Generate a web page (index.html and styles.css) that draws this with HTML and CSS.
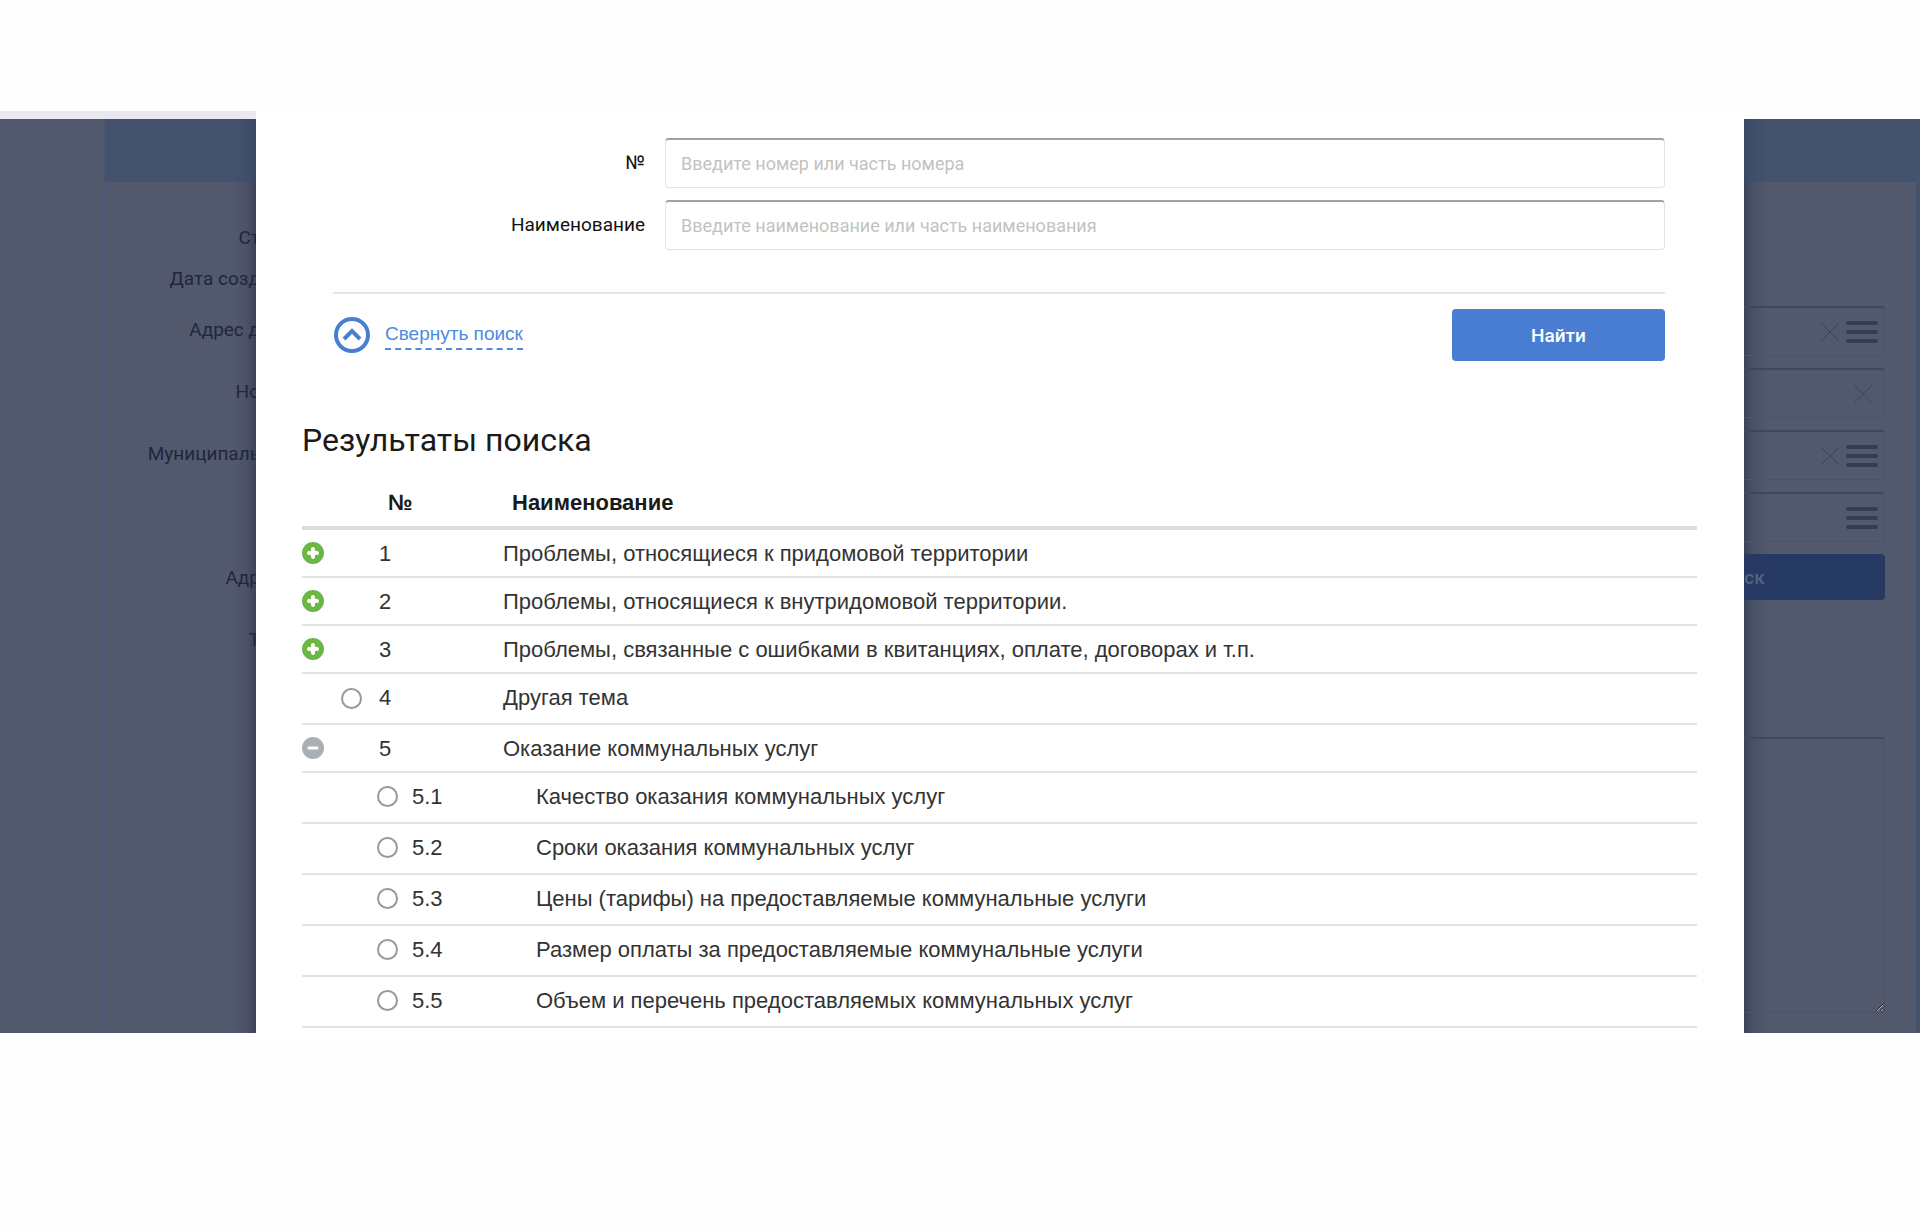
FILE: index.html
```
<!DOCTYPE html>
<html lang="ru">
	<head>
		<meta charset="UTF-8">
		<title>Результаты поиска</title>
		<link rel="stylesheet" href="styles.css">
	</head>
	<body>
		<svg class="sprite" width="0" height="0" aria-hidden="true">
			<symbol id="plus" viewBox="0 0 22 22"><circle cx="11" cy="11" r="11" fill="#6cb644"/><path d="M11 7v8M7 11h8" stroke="#fff" stroke-width="4" stroke-linecap="round"/></symbol>
			<symbol id="minus" viewBox="0 0 22 22"><circle cx="11" cy="11" r="11" fill="#a9afb5"/><path d="M7 11h8" stroke="#fff" stroke-width="3" stroke-linecap="round"/></symbol>
			<symbol id="up" viewBox="0 0 38 38"><circle cx="19" cy="19" r="16" fill="none" stroke="#487dd2" stroke-width="4"/><path d="M11 23l8-8 8 8" fill="none" stroke="#487dd2" stroke-width="4"/></symbol>
			<symbol id="cross" viewBox="0 0 20 20"><path d="M1 1l18 18M19 1L1 19" stroke="#3c435a" stroke-width="1"/></symbol>
			<symbol id="menu" viewBox="0 0 32 24"><path d="M2 3h28M2 12h28M2 21h28" stroke="#353d55" stroke-width="4" stroke-linecap="round"/></symbol>
		</svg>
		<div class="stage">
			<div class="side side-left">
				<div class="panel panel-left">
					<div class="panel-head"></div>
					<ul class="labels">
						<li>Ст</li>
						<li>Дата созд</li>
						<li class="tall">Адрес д</li>
						<li class="tall">Но</li>
						<li class="tall">Муниципаль</li>
						<li class="tall"></li>
						<li class="tall">Адр</li>
						<li class="tall">Т</li>
					</ul>
				</div>
			</div>
			<main class="modal">
				<form class="search">
					<div class="row">
						<label for="num">№</label>
						<input id="num" type="text" placeholder="Введите номер или часть номера">
					</div>
					<div class="row">
						<label for="name">Наименование</label>
						<input id="name" type="text" placeholder="Введите наименование или часть наименования">
					</div>
					<div class="actions">
						<a class="collapse" href="#">
							<svg width="38" height="38"><use href="#up"/></svg>
							<span>Свернуть поиск</span>
						</a>
						<button class="find" type="button">Найти</button>
					</div>
				</form>
				<h1>Результаты поиска</h1>
				<table class="results">
					<thead>
						<tr><th class="c-tree"></th><th class="c-num">№</th><th>Наименование</th></tr>
					</thead>
					<tbody>
						<tr><td><button class="toggle" type="button" aria-label="1"><svg width="22" height="22"><use href="#plus"/></svg></button></td><td>1</td><td>Проблемы, относящиеся к придомовой территории</td></tr>
						<tr><td><button class="toggle" type="button" aria-label="2"><svg width="22" height="22"><use href="#plus"/></svg></button></td><td>2</td><td>Проблемы, относящиеся к внутридомовой территории.</td></tr>
						<tr><td><button class="toggle" type="button" aria-label="3"><svg width="22" height="22"><use href="#plus"/></svg></button></td><td>3</td><td>Проблемы, связанные с ошибками в квитанциях, оплате, договорах и т.п.</td></tr>
						<tr class="leaf"><td><input id="t4" type="radio" name="topic"></td><td>4</td><td><label for="t4">Другая тема</label></td></tr>
						<tr><td><button class="toggle" type="button" aria-label="5"><svg width="22" height="22"><use href="#minus"/></svg></button></td><td>5</td><td>Оказание коммунальных услуг</td></tr>
						<tr class="leaf sub"><td></td><td><input id="t51" type="radio" name="topic">5.1</td><td><label for="t51">Качество оказания коммунальных услуг</label></td></tr>
						<tr class="leaf sub"><td></td><td><input id="t52" type="radio" name="topic">5.2</td><td><label for="t52">Сроки оказания коммунальных услуг</label></td></tr>
						<tr class="leaf sub"><td></td><td><input id="t53" type="radio" name="topic">5.3</td><td><label for="t53">Цены (тарифы) на предоставляемые коммунальные услуги</label></td></tr>
						<tr class="leaf sub"><td></td><td><input id="t54" type="radio" name="topic">5.4</td><td><label for="t54">Размер оплаты за предоставляемые коммунальные услуги</label></td></tr>
						<tr class="leaf sub"><td></td><td><input id="t55" type="radio" name="topic">5.5</td><td><label for="t55">Объем и перечень предоставляемых коммунальных услуг</label></td></tr>
					</tbody>
				</table>
			</main>
			<div class="side side-right">
				<div class="panel panel-right">
					<div class="panel-head"></div>
					<div class="fields">
						<div class="field">
							<input type="text" aria-label="Адрес">
							<button type="button" aria-label="×"><svg width="20" height="20"><use href="#cross"/></svg></button>
							<button type="button" aria-label="☰"><svg width="32" height="24"><use href="#menu"/></svg></button>
						</div>
						<div class="field">
							<input type="text" aria-label="Но">
							<button class="alone" type="button" aria-label="×"><svg width="20" height="20"><use href="#cross"/></svg></button>
						</div>
						<div class="field">
							<input type="text" aria-label="Муниципаль">
							<button type="button" aria-label="×"><svg width="20" height="20"><use href="#cross"/></svg></button>
							<button type="button" aria-label="☰"><svg width="32" height="24"><use href="#menu"/></svg></button>
						</div>
						<div class="field">
							<input type="text" aria-label="Адр">
							<button type="button" aria-label="☰"><svg width="32" height="24"><use href="#menu"/></svg></button>
						</div>
						<button class="dim-button" type="button">ск</button>
						<textarea aria-label="Т"></textarea>
					</div>
				</div>
			</div>
		</div>
	</body>
</html>
```
FILE: styles.css
```
*{box-sizing: border-box;}
body{margin: 0;padding: 111px 0 187px;background: #fefefe;font-family: "Liberation Sans", Arial, sans-serif;font-size: 22px;color: #333;}
button{border: 0;padding: 0;background: none;font: inherit;cursor: pointer;}
svg{display: block;}
.sprite{position: absolute;}

.stage{display: grid;grid-template-columns: 256px minmax(0, 1fr) 176px;}
.side{display: flex;margin-bottom: 8px;overflow: hidden;background: #52596d;}
.side-left{border-top: 8px solid #e9e9ef;padding-left: 103px;background: linear-gradient(to left, #3f4358, #4c5268 10px, #52596d 24px) padding-box;}
.side-right{margin-top: 8px;background: linear-gradient(to right, #3a4359, #475065 8px, #52596d 24px);}
.panel{flex: 1;min-width: 0;}
.panel-left{border-left: 2px solid #49557a;}
.panel-right{border-right: 4px solid #46536f;}
.panel-head{height: 63px;background: rgba(54, 76, 109, 0.5);}

.labels{list-style: none;margin: 0 -4px 0 0;padding: 35px 0 0;text-align: right;font-family: Roboto, sans-serif;font-size: 19px;color: #20263f;}
.labels li{height: 41px;line-height: 41px;white-space: nowrap;}
.labels .tall{height: 62px;line-height: 62px;}

.fields{padding: 124px 31px 0 0;}
.field{display: flex;align-items: center;gap: 6px;height: 50px;margin-bottom: 12px;padding-right: 6px;border: 1px solid #4c5369;border-top: 2px solid #3f465d;border-left: 0;border-radius: 0 4px 4px 0;}
.field input{flex: 1;min-width: 0;height: 40px;border: 0;background: none;outline: none;}
.field .alone{margin-right: 5px;}
.dim-button{display: block;width: 100%;height: 46px;padding-right: 120px;border-radius: 0 4px 4px 0;background: #263963;color: #56627f;font-family: Roboto, sans-serif;font-size: 19px;font-weight: 500;}
textarea{display: block;width: 100%;height: 276px;margin-top: 137px;border: 1px solid #4b5268;border-top: 2px solid #3f465d;border-left: 0;border-radius: 0 4px 4px 0;background: none;resize: vertical;}

.modal{padding: 27px 47px 13px 46px;background: #fff;}
.search{padding: 0 32px 0 31px;}
.row{display: grid;grid-template-columns: 312px minmax(0, 1fr);column-gap: 20px;align-items: center;margin-bottom: 12px;}
.row label{padding-bottom: 2px;text-align: right;font-family: Roboto, sans-serif;font-size: 19px;color: #111;}
.row input{height: 50px;padding: 0 15px;border: 1px solid #e3e3e3;border-top: 2px solid #a0a3a3;border-radius: 4px;background: #fff;font-family: Roboto, sans-serif;font-size: 18px;color: #333;}
.row input::placeholder{color: #c2c2c2;opacity: 1;}
.actions{display: flex;justify-content: space-between;align-items: center;margin-top: 42px;padding-top: 15px;border-top: 2px solid #e6e6e6;}
.collapse{display: flex;align-items: center;gap: 14px;color: #4d8ae0;font-size: 19px;text-decoration: none;}
.collapse span{line-height: 28px;border-bottom: 2px dashed #4d8ae0;}
.find{width: 213px;height: 52px;border-radius: 4px;background: #487dd2;color: #fff;font-family: Roboto, sans-serif;font-size: 19px;font-weight: 500;}

h1{margin: 55px 0 20px;font-family: Roboto, sans-serif;font-size: 32px;line-height: 48px;font-weight: 400;color: #1a1a1a;}

.results{width: 100%;table-layout: fixed;border-collapse: separate;border-spacing: 0;text-align: left;}
.results th{height: 46px;padding: 0 0 4px 9px;border-bottom: 4px solid #dcdcdc;color: #1a1a1a;}
.results td{height: 48px;padding: 1px 0 0;border-bottom: 2px solid #e3e3e3;white-space: nowrap;}
.results .leaf td{height: 51px;padding-bottom: 2px;}
.results .c-tree{width: 77px;}
.results .c-num{width: 124px;}
.results input{appearance: none;display: block;width: 21px;height: 21px;margin: 0 0 0 39px;border: 2px solid #999;border-radius: 50%;background: #fff;}
.results .sub input{display: inline-block;margin: 0 14px 0 -2px;vertical-align: -3px;}
.results .sub label{padding-left: 33px;}
.toggle{display: block;margin-bottom: 2px;}
```
